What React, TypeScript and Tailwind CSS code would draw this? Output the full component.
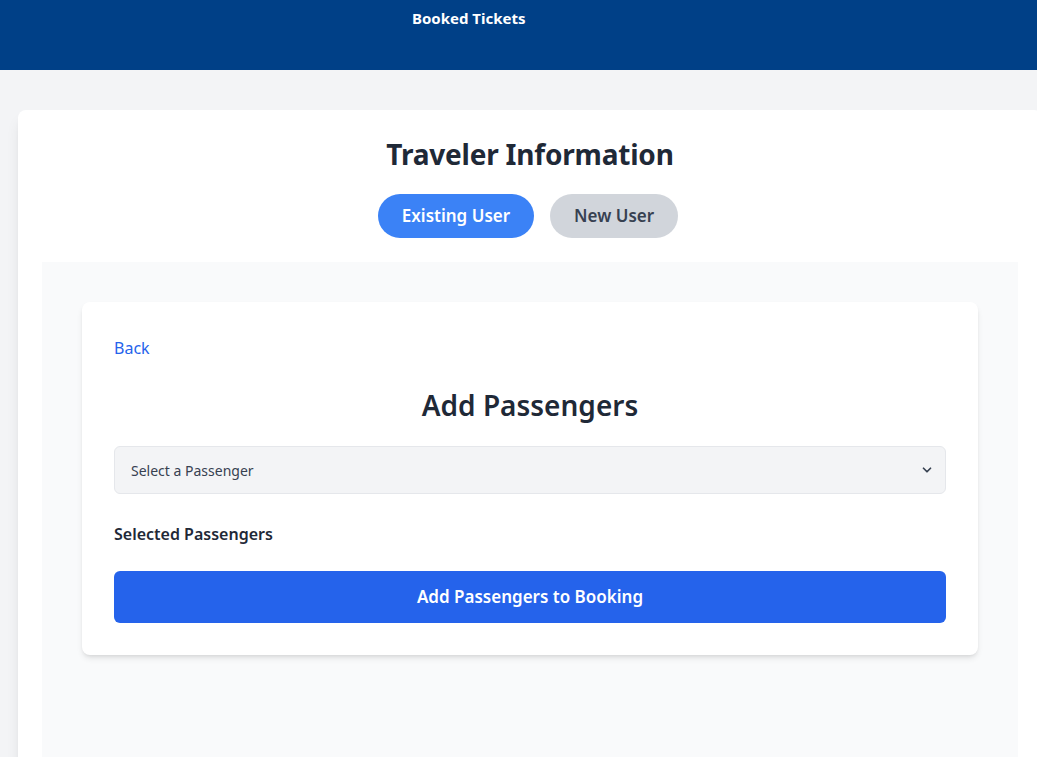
import { ChevronDown } from 'lucide-react'

export default function App() {
  return (
    <div
      className="min-h-screen w-[1037px] h-[757px] overflow-hidden bg-[#f3f4f6]"
      style={{ fontFamily: '"Noto Sans", "Open Sans", sans-serif' }}
    >
      {/* Header */}
      <header className="h-[70px] bg-[#004087] text-white">
        <nav className="flex pl-[412px] pt-[6px]">
          <a href="#" className="text-[15px] font-bold leading-6">
            Booked Tickets
          </a>
        </nav>
      </header>

      {/* Main card */}
      <main className="pt-10 pl-[18px]">
        <div className="w-[1024px] bg-white rounded-lg shadow-lg px-6 pt-[26px] min-h-[700px]">
          <h1 className="text-center text-[28px] font-bold text-[#1f2937] leading-9 tracking-[-0.2px]">
            Traveler Information
          </h1>
          <div className="flex justify-center gap-4 mt-[22px] mr-[4px]">
            <button className="bg-[#3b82f6] text-white text-[17px] font-semibold px-6 h-11 rounded-full">
              Existing User
            </button>
            <button className="bg-[#d1d5db] text-[#374151] text-[17px] font-semibold px-6 h-11 rounded-full">
              New User
            </button>
          </div>

          <section className="mt-6 bg-[#f9fafb] px-10 pt-10 min-h-[500px]">
            <div className="bg-white rounded-lg shadow-md px-8 pt-[34px] pb-8">
              <a href="#" className="text-[#2563eb] text-[16px] leading-6 inline-block">
                Back
              </a>
              <h2 className="text-center text-[28px] font-semibold text-[#1f2937] leading-9 mt-[27px]">
                Add Passengers
              </h2>
              <div className="relative mt-[23px]">
                <select className="w-full h-12 appearance-none bg-[#f3f4f6] border border-[#e5e7eb] rounded-md px-4 text-[14px] text-[#374151] outline-none">
                  <option>Select a Passenger</option>
                </select>
                <ChevronDown
                  className="absolute right-[12px] top-1/2 -translate-y-1/2 text-[#374151] pointer-events-none"
                  size={14}
                  strokeWidth={3}
                />
              </div>
              <h3 className="mt-[28px] text-[16px] font-semibold text-[#1f2937] leading-6">
                Selected Passengers
              </h3>
              <button className="mt-[25px] w-full h-[52px] bg-[#2563eb] text-white text-[17px] font-semibold rounded-md">
                Add Passengers to Booking
              </button>
            </div>
          </section>
        </div>
      </main>
    </div>
  )
}
